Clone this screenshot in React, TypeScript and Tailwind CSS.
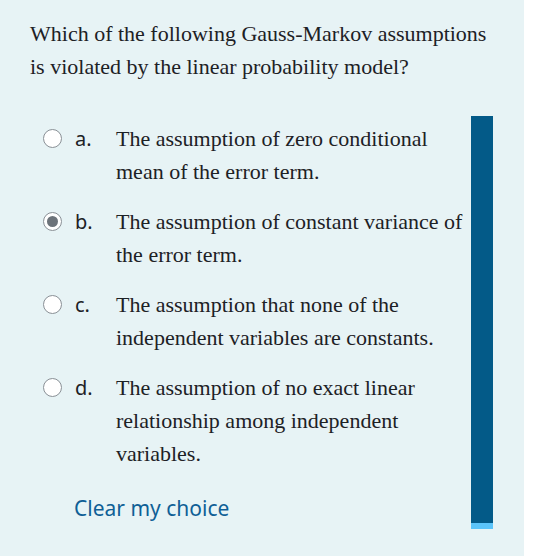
import React from "react";

const options = [
  { key: "a", text: "The assumption of zero conditional mean of the error term.", checked: false },
  { key: "b", text: "The assumption of constant variance of the error term.", checked: true },
  { key: "c", text: "The assumption that none of the independent variables are constants.", checked: false },
  { key: "d", text: "The assumption of no exact linear relationship among independent variables.", checked: false },
];

function Radio({ checked }: { checked: boolean }) {
  return (
    <span className="mt-[7px] flex h-[19px] w-[19px] shrink-0 items-center justify-center rounded-full border border-[#8a9096] bg-white">
      {checked && <span className="h-[11px] w-[11px] rounded-full bg-[#6c737a]" />}
    </span>
  );
}

export default function App() {
  return (
    <div className="flex h-[556px] w-[534px] bg-white">
      <div className="flex w-[524px] flex-col bg-[#e7f3f5]">
        <p className="px-[30px] pt-[17px] font-['Liberation_Serif',serif] text-[22px] leading-[33px] text-[#1d2125]">
          Which of the following Gauss-Markov assumptions is violated by the linear probability model?
        </p>

        <div className="mt-[33px] flex">
          <div className="flex flex-1 flex-col pl-[43px] pt-[6px]">
            <div className="flex flex-col gap-[17px]">
              {options.map((o) => (
                <div key={o.key} className="flex items-start">
                  <Radio checked={o.checked} />
                  <span className="ml-[13px] w-[41px] shrink-0 font-['Noto_Sans',sans-serif] text-[20px] leading-[33px] text-[#1d2125]">
                    {o.key}.
                  </span>
                  <span className="w-[354px] font-['Liberation_Serif',serif] text-[22px] leading-[33px] text-[#1d2125]">
                    {o.text}
                  </span>
                </div>
              ))}
            </div>
            <a className="mt-[22px] ml-[31px] font-['Noto_Sans',sans-serif] text-[21px] leading-[33px] text-[#0f5f96]">
              Clear my choice
            </a>
          </div>
          <div className="mr-[31px] flex w-[22px] flex-col">
            <div className="h-[407px] bg-[#035a88]" />
            <div className="h-[6px] bg-[#5bc4fa]" />
          </div>
        </div>
      </div>
    </div>
  );
}
